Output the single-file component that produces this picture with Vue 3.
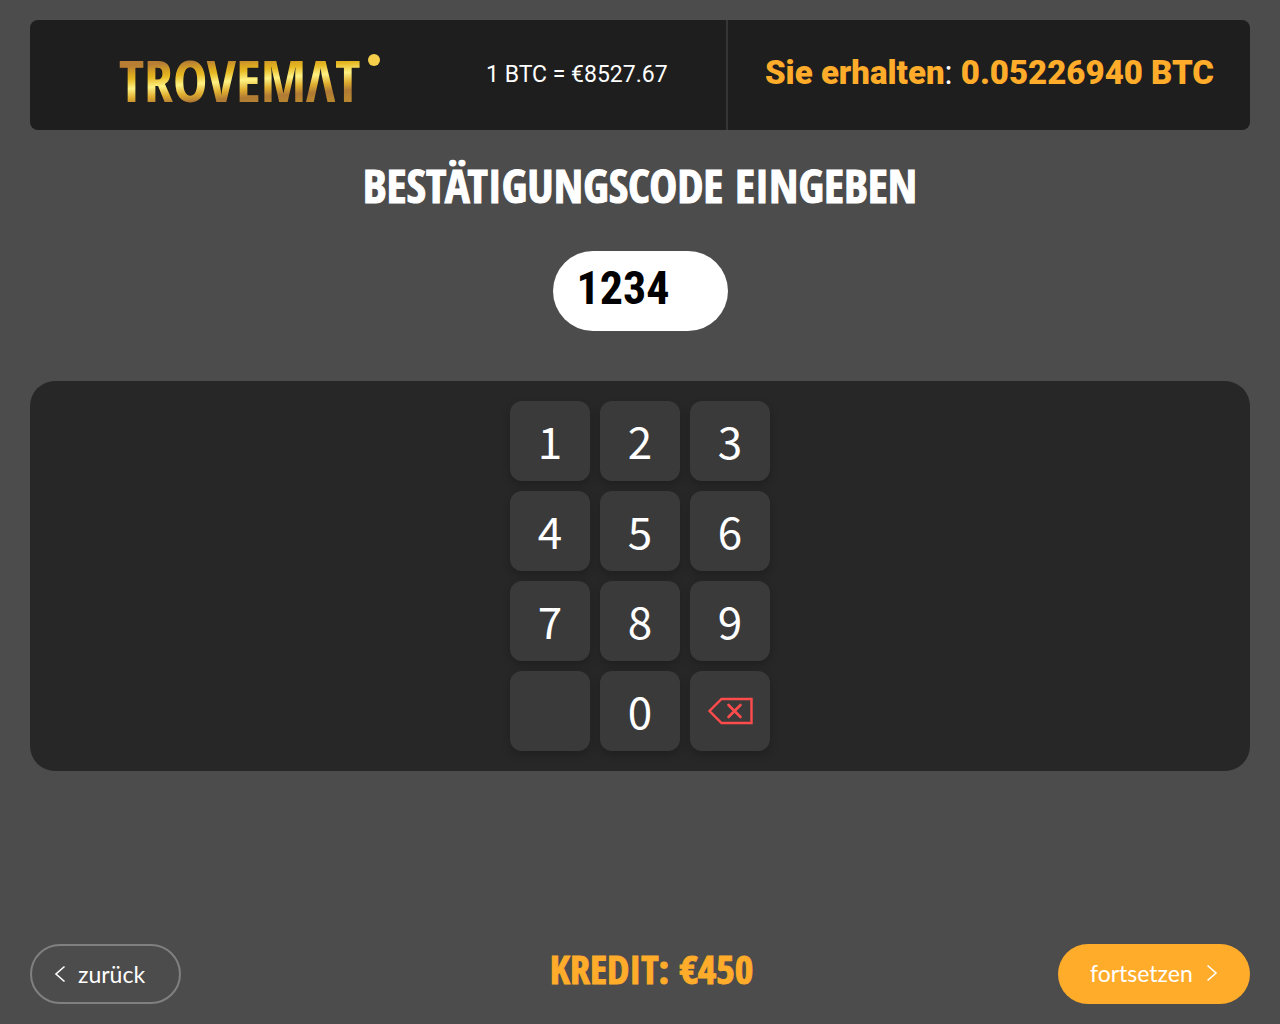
<script setup>
import { ref } from 'vue'

const code = ref('1234')
const keys = ['1', '2', '3', '4', '5', '6', '7', '8', '9', '', '0']

function press(key) {
  if (key && code.value.length < 6) code.value += key
}

function erase() {
  code.value = code.value.slice(0, -1)
}
</script>

<template>
  <div class="page">
    <header class="topbar">
      <div class="brand">
        <svg class="logo" width="262" height="56" viewBox="0 0 262 56" role="img" aria-label="Trovemat">
          <defs>
            <linearGradient id="gold" gradientUnits="userSpaceOnUse" x1="118" y1="-10" x2="124" y2="70">
              <stop offset="0.2" stop-color="#b87f34" />
              <stop offset="0.3" stop-color="#d9a521" />
              <stop offset="0.36" stop-color="#e6b822" />
              <stop offset="0.48" stop-color="#fff283" />
              <stop offset="0.6" stop-color="#e0ae30" />
              <stop offset="0.7" stop-color="#b07a34" />
              <stop offset="0.8" stop-color="#b8862f" />
            </linearGradient>
          </defs>
          <text class="wordmark" x="-1" y="50" fill="url(#gold)">TROVEMΛT</text>
          <circle cx="254" cy="8" r="6" fill="#f5cf4a" />
        </svg>
      </div>
      <p class="rate">1 BTC = €8527.67</p>
      <p class="receive"><b>Sie erhalten</b>: <b>0.05226940 BTC</b></p>
    </header>

    <main class="content">
      <h1 class="title"><label for="code">BESTÄTIGUNGSCODE EINGEBEN</label></h1>
      <input id="code" v-model="code" class="code" type="text" inputmode="numeric" maxlength="6" />
      <section class="pad">
        <div class="keys">
          <button v-for="key in keys" :key="key" class="key" type="button" @click="press(key)">{{ key }}</button>
          <button class="key erase" type="button" aria-label="Löschen" @click="erase">
            <svg width="46" height="28" viewBox="0 0 46 28" fill="none" stroke="#ff4b4b">
              <path d="M14.5 2H44.5V26H14.5L2.5 14Z" stroke-width="2.4" />
              <path d="M21.5 8L33.5 20M33.5 8L21.5 20" stroke-width="2.6" stroke-linecap="round" />
            </svg>
          </button>
        </div>
      </section>
    </main>

    <footer class="actions">
      <button class="btn back" type="button">
        <svg width="12" height="18" viewBox="0 0 12 18" fill="none" stroke="currentColor" stroke-width="1.6">
          <path d="M10.5 1.5L2 9L10.5 16.5" />
        </svg>
        zurück
      </button>
      <p class="credit">KREDIT: €450</p>
      <button class="btn next" type="button">
        fortsetzen
        <svg width="12" height="18" viewBox="0 0 12 18" fill="none" stroke="currentColor" stroke-width="1.6">
          <path d="M1.5 1.5L10 9L1.5 16.5" />
        </svg>
      </button>
    </footer>
  </div>
</template>

<style>
body {
  margin: 0;
  background: #4c4c4c;
}
</style>

<style scoped>
.page {
  box-sizing: border-box;
  min-height: 100vh;
  padding: 20px 30px;
  display: flex;
  flex-direction: column;
  background: #4c4c4c;
  color: #fff;
  font-family: Lato, "Noto Sans", sans-serif;
}

p,
h1 {
  margin: 0;
}

button,
input {
  border: 0;
  font-family: inherit;
  color: inherit;
}

.topbar {
  display: grid;
  grid-template-columns: 396px 1fr 524px;
  height: 110px;
  border-radius: 8px;
  background: #1e1e1e;
  font-family: Roboto, sans-serif;
}

.brand {
  padding: 32px 0 0 90px;
}

.logo {
  display: block;
  overflow: visible;
}

.wordmark {
  font-family: "Open Sans Condensed", "Roboto Condensed", sans-serif;
  font-size: 58px;
  font-weight: 700;
}

.rate {
  padding: 40px 0 0 60px;
  font-size: 23px;
  line-height: 30px;
  white-space: nowrap;
}

.receive {
  border-left: 2px solid #353535;
  padding: 33px 36px 0 0;
  font-size: 33px;
  line-height: 40px;
  text-align: right;
  white-space: nowrap;
}

.receive b {
  color: #ffac2b;
  font-weight: 900;
}

.content {
  flex: 1;
  display: flex;
  flex-direction: column;
  align-items: center;
}

.title,
.credit {
  font-family: "Open Sans Condensed", "Roboto Condensed", sans-serif;
  font-weight: 700;
  white-space: nowrap;
  -webkit-text-stroke: 1px currentColor;
}

.title {
  padding: 25px 0 1px;
  font-size: 47px;
  line-height: 60px;
}

.code {
  box-sizing: border-box;
  width: 175px;
  height: 80px;
  margin-top: 35px;
  padding: 0 24px 6px;
  border-radius: 40px;
  background: #fff;
  color: #000;
  font-family: "Roboto Condensed", Roboto, sans-serif;
  font-size: 46px;
  font-weight: 700;
}

.pad {
  align-self: stretch;
  margin-top: 50px;
  padding: 20px;
  border-radius: 25px;
  background: #272727;
}

.keys {
  display: grid;
  grid-template-columns: repeat(3, 80px);
  gap: 10px;
  justify-content: center;
}

.key {
  display: flex;
  align-items: center;
  justify-content: center;
  height: 80px;
  padding: 0 0 2px;
  border-radius: 12px;
  background: #3a3a3a;
  box-shadow: 0 4px 8px rgba(0, 0, 0, 0.2);
  font-family: "Noto Sans CJK SC", sans-serif;
  font-size: 44px;
  line-height: 60px;
}

.erase {
  padding: 0;
}

.actions {
  display: flex;
  align-items: center;
  justify-content: space-between;
}

.btn {
  box-sizing: border-box;
  display: flex;
  align-items: center;
  height: 60px;
  border-radius: 30px;
  font-size: 23px;
}

.back {
  width: 151px;
  padding: 0 22px;
  gap: 12px;
  border: 2px solid #808080;
  background: transparent;
}

.credit {
  padding: 0 0 10px 64px;
  color: #ffac2b;
  font-size: 40px;
  line-height: 48px;
}

.next {
  width: 192px;
  padding: 0 32px 2px;
  justify-content: space-between;
  background: #ffac2b;
}
</style>
